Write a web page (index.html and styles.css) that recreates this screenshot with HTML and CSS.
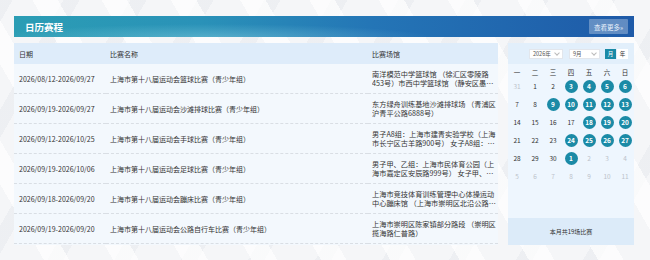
FILE: index.html
```html
<!DOCTYPE html>
<html lang="zh-CN">
<head>
  <meta charset="UTF-8">
  <title>日历赛程</title>
  <link rel="stylesheet" href="styles.css">
</head>
<body>
  <div class="page">
    <!-- Title bar -->
    <div class="banner">
      <h2>日历赛程</h2>
      <a class="more" href="#">查看更多»</a>
    </div>

    <div class="content">
      <!-- Schedule table -->
      <div class="schedule">
        <table>
          <thead>
            <tr>
              <th class="col-date">日期</th>
              <th class="col-name">比赛名称</th>
              <th class="col-venue">比赛场馆</th>
            </tr>
          </thead>
          <tbody>
            <tr>
              <td>2026/08/12-2026/09/27</td>
              <td>上海市第十八届运动会篮球比赛（青少年组）</td>
              <td><div class="venue">南洋模范中学篮球馆 （徐汇区零陵路453号）市西中学篮球馆 （静安区愚园路100号）</div></td>
            </tr>
            <tr>
              <td>2026/09/19-2026/09/27</td>
              <td>上海市第十八届运动会沙滩排球比赛（青少年组）</td>
              <td><div class="venue">东方绿舟训练基地沙滩排球场 （青浦区沪青平公路6888号）</div></td>
            </tr>
            <tr>
              <td>2026/09/12-2026/10/25</td>
              <td>上海市第十八届运动会手球比赛（青少年组）</td>
              <td><div class="venue">男子A8组：上海市建青实验学校（上海市长宁区古羊路900号） 女子A8组：上海市</div></td>
            </tr>
            <tr>
              <td>2026/09/19-2026/10/06</td>
              <td>上海市第十八届运动会足球比赛（青少年组）</td>
              <td><div class="venue">男子甲、乙组：上海市民体育公园（上海市嘉定区安辰路999号） 女子甲、乙组</div></td>
            </tr>
            <tr>
              <td>2026/09/18-2026/09/20</td>
              <td>上海市第十八届运动会蹦床比赛（青少年组）</td>
              <td><div class="venue">上海市竞技体育训练管理中心体操运动中心蹦床馆 （上海市崇明区北沿公路2888号）</div></td>
            </tr>
            <tr>
              <td>2026/09/19-2026/09/20</td>
              <td>上海市第十八届运动会公路自行车比赛（青少年组）</td>
              <td><div class="venue">上海市崇明区陈家镇部分路段 （崇明区揽海路仁普路）</div></td>
            </tr>
          </tbody>
        </table>
      </div>

      <!-- Calendar -->
      <div class="calendar">
        <div class="cal-toolbar">
          <span class="cal-select year">2026年<i></i></span>
          <span class="cal-select month">9月<i></i></span>
          <span class="cal-mode active">月</span>
          <span class="cal-mode">年</span>
        </div>
        <div class="cal-week">
          <span>一</span><span>二</span><span>三</span><span>四</span><span>五</span><span>六</span><span>日</span>
        </div>
        <div class="cal-days">
          <span class="other">31</span><span>1</span><span>2</span><span class="on">3</span><span class="on">4</span><span class="on">5</span><span class="on">6</span>
          <span>7</span><span>8</span><span class="on">9</span><span class="on">10</span><span class="on">11</span><span class="on">12</span><span class="on">13</span>
          <span>14</span><span>15</span><span>16</span><span>17</span><span class="on">18</span><span class="on">19</span><span class="on">20</span>
          <span>21</span><span>22</span><span>23</span><span class="on">24</span><span class="on">25</span><span class="on">26</span><span class="on">27</span>
          <span>28</span><span>29</span><span>30</span><span class="on">1</span><span class="other">2</span><span class="other">3</span><span class="other">4</span>
          <span class="other">5</span><span class="other">6</span><span class="other">7</span><span class="other">8</span><span class="other">9</span><span class="other">10</span><span class="other">11</span>
        </div>
        <div class="cal-footer">本月共19场比赛</div>
      </div>
    </div>
  </div>
</body>
</html>
```

FILE: styles.css
```css
body {
  margin: 0;
  font-family: "Noto Sans CJK SC", "Noto Sans", sans-serif;
  color: #333;
  background-color: #f5f6f8;
  background-image:
    repeating-linear-gradient(60deg, rgba(255,255,255,0) 0 38px, rgba(255,255,255,0.7) 38px 60px),
    repeating-linear-gradient(-60deg, rgba(228,231,236,0) 0 44px, rgba(228,231,236,0.45) 44px 58px);
  height: 260px;
  overflow: hidden;
}
.page {
  padding: 16px 16px 0 14px;
}
.banner {
  height: 21px;
  display: flex;
  align-items: center;
  justify-content: space-between;
  padding: 0 6px 0 11px;
  background:
    radial-gradient(ellipse 220px 14px at 200px 22px, rgba(140,210,225,0.45), rgba(140,210,225,0)),
    linear-gradient(90deg, #2b9db4 0%, #2a92b8 30%, #2475b6 58%, #1e5aa8 100%);
}
.banner h2 {
  margin: 0;
  font-size: 9.5px;
  font-weight: bold;
  color: #fff;
}
.more {
  display: flex;
  align-items: center;
  justify-content: center;
  width: 39px;
  height: 15px;
  font-size: 6.5px;
  color: #e8f0fa;
  text-decoration: none;
  background: rgba(255,255,255,0.3);
  border-radius: 1px;
}
.content {
  display: flex;
  gap: 10px;
  margin-top: 6px;
}
.schedule {
  width: 484px;
  height: 202px;
  background: #f3f8fd;
}
table {
  width: 100%;
  border-collapse: collapse;
  table-layout: fixed;
  font-size: 7px;
}
th {
  height: 21px;
  padding: 0 0 0 4px;
  text-align: left;
  font-weight: normal;
  background: #deecfa;
}
td {
  height: 29px;
  padding: 0 6px 0 4px;
  border-bottom: 1px dashed #d9dee4;
  white-space: nowrap;
}
th.col-date {
  width: 87px;
  padding-left: 5px;
}
th.col-name {
  width: 258px;
}
td:first-child {
  padding-left: 5px;
}
td:last-child {
  padding-right: 0;
}
.venue {
  width: 126px;
  white-space: normal;
  font-size: 7.2px;
  line-height: 9px;
  display: -webkit-box;
  -webkit-line-clamp: 2;
  -webkit-box-orient: vertical;
  overflow: hidden;
}
.calendar {
  width: 126px;
  height: 202px;
  display: flex;
  flex-direction: column;
  background: #eef6fe;
}
.cal-toolbar {
  height: 21px;
  display: flex;
  align-items: center;
  justify-content: flex-end;
  padding-right: 6px;
  background: #e2effb;
  font-size: 5.5px;
}
.cal-select {
  display: flex;
  align-items: center;
  justify-content: space-between;
  height: 10px;
  padding: 0 3px;
  background: #fff;
  border: 1px solid #e2e6ec;
  box-sizing: border-box;
  color: #555;
}
.cal-select i {
  width: 3px;
  height: 3px;
  border-right: 0.5px solid #bbb;
  border-bottom: 0.5px solid #bbb;
  transform: rotate(45deg);
  margin-top: -2px;
}
.cal-select.year {
  width: 34px;
  margin-right: 6px;
}
.cal-select.month {
  width: 31px;
  margin-right: 5px;
}
.cal-mode {
  width: 11px;
  height: 10px;
  display: flex;
  align-items: center;
  justify-content: center;
  background: #fff;
  color: #333;
}
.cal-mode.active {
  background: #1b8aa6;
  color: #fff;
  margin-right: 1px;
}
.cal-week,
.cal-days {
  display: grid;
  grid-template-columns: repeat(7, 18px);
  font-size: 6.5px;
  text-align: center;
}
.cal-week {
  margin-top: 3px;
  height: 10px;
  line-height: 10px;
}
.cal-days {
  grid-auto-rows: 18px;
}
.cal-days span {
  display: flex;
  align-items: center;
  justify-content: center;
}
.cal-days .other {
  color: #bcc2ca;
}
.cal-days .on {
  color: #fff;
  font-weight: bold;
  position: relative;
  z-index: 0;
}
.cal-days .on::before {
  content: "";
  position: absolute;
  width: 13px;
  height: 13px;
  left: 2.5px;
  top: 2.5px;
  border-radius: 50%;
  background: #1b8aa6;
  z-index: -1;
}
.cal-footer {
  margin-top: auto;
  height: 27px;
  display: flex;
  align-items: center;
  justify-content: center;
  background: #dcebf9;
  font-size: 6px;
}
```
